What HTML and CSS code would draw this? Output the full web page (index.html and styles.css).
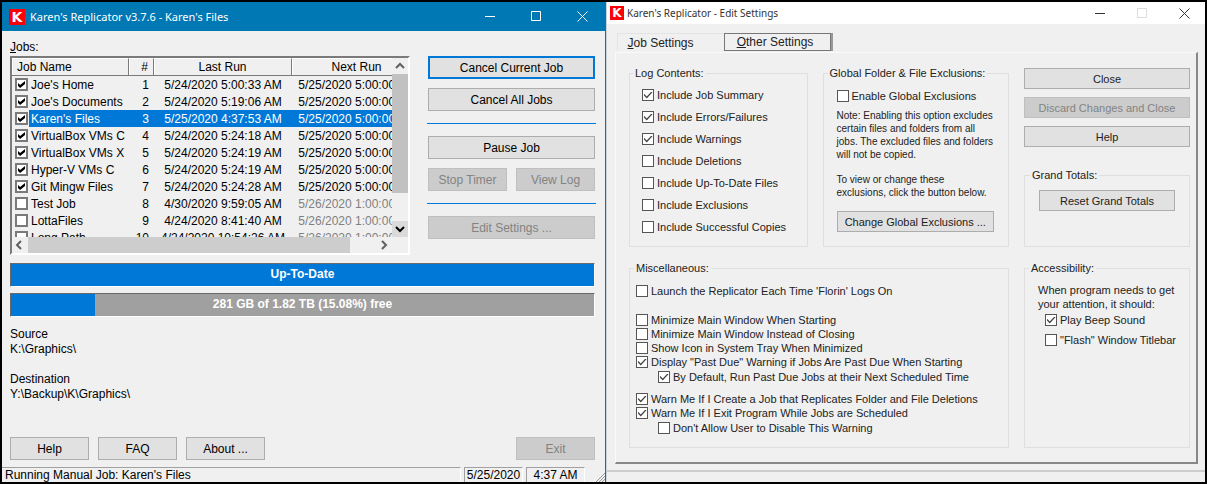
FILE: index.html
```html
<!DOCTYPE html>
<html lang="en">
<head>
	<meta charset="UTF-8">
	<title>Karen's Replicator</title>
	<link rel="stylesheet" href="styles.css">
</head>
<body>
	<div class="window main">
		<div class="titlebar">
			<span class="logo">K</span>
			<h1>Karen's Replicator v3.7.6 - Karen's Files</h1>
			<div class="winctr">
				<button type="button" aria-label="Minimize"><svg width="11" height="11"><path d="M0 5.5h10"/></svg></button>
				<button type="button" aria-label="Maximize"><svg width="11" height="11"><path d="M.5 .5h9v9h-9z"/></svg></button>
				<button type="button" aria-label="Close"><svg width="11" height="11"><path d="M.5 .5l10 10M10.5 .5l-10 10"/></svg></button>
			</div>
		</div>
		<div class="client">
			<p class="joblabel"><u>J</u>obs:</p>
			<div class="top">
				<div class="list">
					<div class="view">
						<table>
							<colgroup>
								<col class="c_box"><col class="c_name"><col class="c_num"><col class="c_last"><col class="c_next">
							</colgroup>
							<thead>
								<tr><th colspan="2" class="name">Job Name</th><th class="num">#</th><th>Last Run</th><th>Next Run</th></tr>
							</thead>
							<tbody>
								<tr><td class="box"><input type="checkbox" id="j1" checked></td><td class="name"><label for="j1">Joe's Home</label></td><td class="num">1</td><td>5/24/2020 5:00:33 AM</td><td>5/25/2020 5:00:00 AM</td></tr>
								<tr><td class="box"><input type="checkbox" id="j2" checked></td><td class="name"><label for="j2">Joe's Documents</label></td><td class="num">2</td><td>5/24/2020 5:19:06 AM</td><td>5/25/2020 5:00:00 AM</td></tr>
								<tr class="cur"><td class="box"><input type="checkbox" id="j3" checked></td><td class="name"><label for="j3">Karen's Files</label></td><td class="num">3</td><td>5/25/2020 4:37:53 AM</td><td>5/25/2020 5:00:00 AM</td></tr>
								<tr><td class="box"><input type="checkbox" id="j4" checked></td><td class="name"><label for="j4">VirtualBox VMs C</label></td><td class="num">4</td><td>5/24/2020 5:24:18 AM</td><td>5/25/2020 5:00:00 AM</td></tr>
								<tr><td class="box"><input type="checkbox" id="j5" checked></td><td class="name"><label for="j5">VirtualBox VMs X</label></td><td class="num">5</td><td>5/24/2020 5:24:19 AM</td><td>5/25/2020 5:00:00 AM</td></tr>
								<tr><td class="box"><input type="checkbox" id="j6" checked></td><td class="name"><label for="j6">Hyper-V VMs C</label></td><td class="num">6</td><td>5/24/2020 5:24:19 AM</td><td>5/25/2020 5:00:00 AM</td></tr>
								<tr><td class="box"><input type="checkbox" id="j7" checked></td><td class="name"><label for="j7">Git Mingw Files</label></td><td class="num">7</td><td>5/24/2020 5:24:28 AM</td><td>5/25/2020 5:00:00 AM</td></tr>
								<tr><td class="box"><input type="checkbox" id="j8"></td><td class="name"><label for="j8">Test Job</label></td><td class="num">8</td><td>4/30/2020 9:59:05 AM</td><td class="off">5/26/2020 1:00:00 AM</td></tr>
								<tr><td class="box"><input type="checkbox" id="j9"></td><td class="name"><label for="j9">LottaFiles</label></td><td class="num">9</td><td>4/24/2020 8:41:40 AM</td><td class="off">5/26/2020 1:00:00 AM</td></tr>
								<tr><td class="box"><input type="checkbox" id="j10"></td><td class="name"><label for="j10">Long Path</label></td><td class="num">10</td><td>4/24/2020 10:54:26 AM</td><td class="off">5/26/2020 1:00:00 AM</td></tr>
							</tbody>
						</table>
					</div>
					<div class="vscroll">
						<svg width="16" height="16"><path d="M4 10l4-4 4 4"/></svg>
						<b></b>
						<svg class="down" width="16" height="16"><path d="M4 6l4 4 4-4"/></svg>
					</div>
					<div class="hscroll">
						<svg width="16" height="16"><path d="M9 4l-4 4 4 4"/></svg>
						<b></b>
						<svg width="16" height="16"><path d="M6 4l4 4-4 4"/></svg>
					</div>
				</div>
				<div class="side">
					<button type="button" class="btn default">Cancel Current Job</button>
					<button type="button" class="btn">Cancel All Jobs</button>
					<hr>
					<button type="button" class="btn">Pause Job</button>
					<div class="pair">
						<button type="button" class="btn" disabled>Stop Timer</button>
						<button type="button" class="btn" disabled>View Log</button>
					</div>
					<hr>
					<button type="button" class="btn" disabled>Edit Settings ...</button>
				</div>
			</div>
			<div class="bar"><i style="width:100%"></i><span>Up-To-Date</span></div>
			<div class="bar"><i style="width:14.4%"></i><span>281 GB of 1.82 TB (15.08%) free</span></div>
			<dl class="paths">
				<dt>Source</dt>
				<dd>K:\Graphics\</dd>
				<dt>Destination</dt>
				<dd>Y:\Backup\K\Graphics\</dd>
			</dl>
			<div class="bottom">
				<button type="button" class="btn">Help</button>
				<button type="button" class="btn">FAQ</button>
				<button type="button" class="btn">About ...</button>
				<button type="button" class="btn exit" disabled>Exit</button>
			</div>
		</div>
		<div class="status">
			<span class="msg">Running Manual Job: Karen's Files</span>
			<span class="date">5/25/2020</span>
			<span class="time">4:37 AM</span>
			<svg class="grip" width="9" height="9"><path d="M0 9l9-9M3 9l6-6M6 9l3-3"/></svg>
		</div>
	</div>

	<div class="window settings">
		<div class="titlebar">
			<span class="logo">K</span>
			<h1>Karen's Replicator - Edit Settings</h1>
			<div class="winctr">
				<button type="button" aria-label="Minimize"><svg width="11" height="11"><path d="M0 5.5h10"/></svg></button>
				<button type="button" aria-label="Maximize" disabled><svg width="11" height="11"><path d="M.5 .5h9v9h-9z"/></svg></button>
				<button type="button" aria-label="Close"><svg width="11" height="11"><path d="M.5 .5l10 10M10.5 .5l-10 10"/></svg></button>
			</div>
		</div>
		<div class="tabs">
			<button type="button"><u>J</u>ob Settings</button>
			<button type="button" class="cur"><u>O</u>ther Settings</button>
		</div>
		<div class="panel">
			<fieldset class="log">
				<legend>Log Contents:</legend>
				<label><input type="checkbox" checked>Include Job Summary</label>
				<label><input type="checkbox" checked>Include Errors/Failures</label>
				<label><input type="checkbox" checked>Include Warnings</label>
				<label><input type="checkbox">Include Deletions</label>
				<label><input type="checkbox">Include Up-To-Date Files</label>
				<label><input type="checkbox">Include Exclusions</label>
				<label><input type="checkbox">Include Successful Copies</label>
			</fieldset>
			<fieldset class="global">
				<legend>Global Folder &amp; File Exclusions:</legend>
				<label><input type="checkbox">Enable Global Exclusions</label>
				<p>Note: Enabling this option excludes<br>certain files and folders from all<br>jobs. The excluded files and folders<br>will not be copied.</p>
				<p>To view or change these<br>exclusions, click the button below.</p>
				<button type="button" class="btn">Change Global Exclusions ...</button>
			</fieldset>
			<div class="actions">
				<button type="button" class="btn">Close</button>
				<button type="button" class="btn" disabled>Discard Changes and Close</button>
				<button type="button" class="btn">Help</button>
				<fieldset class="totals">
					<legend>Grand Totals:</legend>
					<button type="button" class="btn">Reset Grand Totals</button>
				</fieldset>
			</div>
			<fieldset class="misc">
				<legend>Miscellaneous:</legend>
				<div class="group first">
					<label><input type="checkbox">Launch the Replicator Each Time 'Florin' Logs On</label>
				</div>
				<div class="group">
					<label><input type="checkbox">Minimize Main Window When Starting</label>
					<label><input type="checkbox">Minimize Main Window Instead of Closing</label>
					<label><input type="checkbox">Show Icon in System Tray When Minimized</label>
					<label><input type="checkbox" checked>Display "Past Due" Warning if Jobs Are Past Due When Starting</label>
					<label class="sub"><input type="checkbox" checked>By Default, Run Past Due Jobs at their Next Scheduled Time</label>
				</div>
				<div class="group">
					<label><input type="checkbox" checked>Warn Me If I Create a Job that Replicates Folder and File Deletions</label>
					<label><input type="checkbox" checked>Warn Me If I Exit Program While Jobs are Scheduled</label>
					<label class="sub"><input type="checkbox">Don't Allow User to Disable This Warning</label>
				</div>
			</fieldset>
			<fieldset class="access">
				<legend>Accessibility:</legend>
				<p>When program needs to get<br>your attention, it should:</p>
				<label><input type="checkbox" checked>Play Beep Sound</label>
				<label><input type="checkbox">"Flash" Window Titlebar</label>
			</fieldset>
		</div>
		<div class="foot"></div>
	</div>
</body>
</html>
```
FILE: styles.css
```css
*{
	margin: 0;
	padding: 0;
	box-sizing: border-box;
}
body{
	display: grid;
	grid-template-columns: 604fr 598fr;
	gap: 1px;
	min-height: 100vh;
	padding: 2px;
	background: #000;
	color: #000;
	font: 12px/14px "Liberation Sans", Arial, sans-serif;
}
button,input{
	font: inherit;
	color: inherit;
}
.window{
	display: flex;
	flex-direction: column;
	min-width: 0;
	background: #f0f0f0;
}
.main{
	border-right: 1px solid #0078b4;
	box-shadow: 1px 0 0 #c8d4dc;
}

/* title bars */
.titlebar{
	display: flex;
	align-items: center;
	height: 29px;
	padding-left: 7px;
	background: #0078b4;
	color: #fff;
}
.titlebar h1{
	flex: 1;
	padding-left: 5px;
	font: 11px/16px "Noto Sans", "Open Sans", sans-serif;
	white-space: nowrap;
}
.logo{
	width: 16px;
	height: 16px;
	background: #fb0007;
	color: #fff;
	font: bold 14px/16px "DejaVu Sans", sans-serif;
	text-align: center;
}
.winctr{
	display: flex;
	align-self: stretch;
}
.winctr button{
	display: grid;
	place-items: center;
	width: 46px;
	border: 0;
	background: none;
}
.winctr svg{
	fill: none;
	stroke: currentColor;
}
.winctr button:disabled{
	color: #ddd;
}

/* buttons */
.btn{
	height: 23px;
	border: 1px solid #adadad;
	background: #e1e1e1;
	white-space: nowrap;
}
.btn.default{
	border: 2px solid #0078d7;
}
.btn:disabled{
	border-color: #bfbfbf;
	background: #ccc;
	color: #838383;
}

/* main window */
.client{
	flex: 1;
	display: flex;
	flex-direction: column;
	padding: 9px 10px 7px 8px;
}
.joblabel{
	margin-bottom: 2px;
}
.top{
	display: grid;
	grid-template-columns: 1fr 167px;
	gap: 18px;
	margin-bottom: 8px;
}
.list{
	display: grid;
	grid-template-columns: 1fr 16px;
	grid-template-rows: 179px 16px;
	min-width: 0;
	border: 2px solid #fff;
	border-top-color: #7a7a7a;
	border-left-color: #7a7a7a;
}
.view{
	overflow: hidden;
}
.view table{
	width: 410px;
	table-layout: fixed;
	border-collapse: separate;
	border-spacing: 0;
}
.c_box{
	width: 17px;
}
.c_name{
	width: 100px;
}
.c_num{
	width: 25px;
}
.c_last{
	width: 138px;
}
.c_next{
	width: 130px;
}
.view th{
	height: 18px;
	border-top: 1px solid #fff;
	border-right: 1px solid #7a7a7a;
	border-bottom: 1px solid #7a7a7a;
	box-shadow: inset 1px 0 0 #fff;
	font-weight: normal;
}
.view td{
	height: 17px;
	text-align: center;
	white-space: nowrap;
}
.view .name{
	padding-left: 2px;
	text-align: left;
}
.view th.name{
	padding-left: 5px;
}
.view .num{
	padding-right: 5px;
	text-align: right;
}
.view .box{
	padding-left: 3px;
}
.view .off{
	color: #808080;
}
.cur td{
	background: #0078d7;
	color: #fff;
}
.cur td.box{
	background: none;
}
.view input{
	appearance: none;
	display: grid;
	place-items: center;
	width: 13px;
	height: 13px;
	border: 2px solid #7a7a7a;
	background: #fff;
}
.view input:checked::after{
	content: "";
	width: 7px;
	height: 7px;
	background: #000;
	clip-path: polygon(0 28%, 0 70%, 30% 100%, 100% 42%, 100% 0, 30% 58%);
}
.vscroll{
	display: grid;
	grid-template-rows: 16px 119px 1fr;
}
.vscroll svg,.hscroll svg{
	display: block;
	fill: none;
	stroke: #606060;
	stroke-width: 2;
}
.vscroll b{
	background: #c1c1c1;
}
.vscroll svg.down{
	align-self: end;
	background: #dadada;
	stroke: #000;
}
.hscroll{
	display: flex;
}
.hscroll b{
	flex: 1;
	margin-right: 26px;
	background: #cdcdcd;
}
.side{
	display: flex;
	flex-direction: column;
	gap: 9px;
}
.side hr{
	margin: 3px -1px;
	border: 0;
	border-top: 1px solid #0078d7;
}
.pair{
	display: grid;
	grid-template-columns: 1fr 1fr;
	gap: 9px;
}
.bar{
	display: grid;
	height: 24px;
	margin-bottom: 6px;
	border: 1px solid #fff;
	border-top-color: #696969;
	border-left-color: #696969;
	background: #a0a0a0;
	color: #fff;
	font-weight: bold;
	line-height: 20px;
	text-align: center;
}
.bar i,.bar span{
	grid-area: 1 / 1;
}
.bar i{
	background: #0078d7;
}
.paths{
	padding-top: 4px;
	line-height: 15px;
}
.paths dd{
	margin-bottom: 15px;
}
.bottom{
	display: flex;
	gap: 9px;
	margin-top: auto;
}
.bottom .btn{
	width: 79px;
}
.bottom .exit{
	margin-left: auto;
}
.status{
	display: flex;
	gap: 3px;
	height: 15px;
}
.status span{
	border-top: 1px solid #a0a0a0;
}
.status .msg{
	flex: 1;
	padding-left: 3px;
	border-right: 1px solid #fff;
}
.status .date,.status .time{
	width: 59px;
	border-left: 1px solid #a0a0a0;
	border-right: 1px solid #fff;
	text-align: center;
}
.grip{
	align-self: end;
	margin-left: 8px;
	fill: none;
	stroke: #999;
}

/* settings window */
.settings{
	color: #222;
	font-size: 11px;
}
.settings .titlebar{
	height: 22px;
	padding-left: 3px;
	background: #fff;
	color: #333;
}
.settings .titlebar h1{
	padding-left: 3px;
	font-size: 10px;
}
.settings .logo{
	width: 14px;
	height: 14px;
	font-size: 12px;
	line-height: 14px;
}
.settings .winctr button{
	width: 42px;
}
.tabs{
	display: flex;
	margin-top: 9px;
	padding-left: 10px;
}
.tabs button{
	width: 107px;
	height: 18px;
	border: 1px solid #e4e4e4;
	border-width: 1px 0 0 1px;
	background: none;
	font-size: 12px;
	padding-right: 21px;
}
.tabs .cur{
	border: 1px solid #777;
	box-shadow: 2px 0 0 #999;
	padding-right: 5px;
}
.panel{
	flex: 1;
	display: grid;
	grid-template-columns: 180fr 188fr 166px;
	grid-template-rows: 181px 1fr;
	gap: 14px 15px;
	margin: 1px 7px 0 8px;
	padding: 13px 6px 14px 13px;
	border: 1px solid #fafafa;
	border-right: 2px solid #888;
	border-bottom: 2px solid #888;
}
.panel fieldset{
	min-width: 0;
	border: 1px solid #dfdfdf;
}
/* the legend starts left of the fieldset's own padding */
.panel legend{
	margin-left: -9px;
	padding: 0 2px;
	white-space: nowrap;
}
.panel label{
	display: flex;
	align-items: center;
	gap: 3px;
	height: 14px;
	white-space: nowrap;
}
.panel input{
	appearance: none;
	display: grid;
	place-items: center;
	width: 12px;
	height: 12px;
	border: 1px solid #555;
	background: #fff;
}
.panel input:checked::after{
	content: "";
	width: 9px;
	height: 7px;
	background: #444;
	clip-path: polygon(0 50%, 10% 36%, 36% 72%, 88% 0, 100% 12%, 36% 100%);
}
.panel .btn{
	height: 21px;
}
.panel .log{
	padding: 8px 0 0 12px;
}
.log label{
	margin-bottom: 8px;
}
.panel .global{
	padding: 9px 14px 0 13px;
}
.global p{
	margin-bottom: 12px;
	font-size: 10px;
	line-height: 13px;
	white-space: nowrap;
}
.global label{
	margin-bottom: 6px;
}
.global .btn{
	width: 100%;
}
.actions{
	display: flex;
	flex-direction: column;
	gap: 8px;
	padding-top: 2px;
}
.panel .totals{
	flex: 1;
	margin-top: 13px;
	padding: 8px 14px;
}
.totals .btn{
	width: 100%;
}
.panel .misc{
	grid-column: 1 / 3;
	padding: 9px 6px 0;
}
.misc legend{
	margin-left: -2px;
}
.group{
	margin-bottom: 8px;
}
.group.first{
	margin-bottom: 15px;
}
.panel .sub{
	margin: 1px 0 0 22px;
}
.panel .access{
	padding: 8px 0 0 13px;
}
.access label{
	margin: 2px 0 6px 7px;
}
.foot{
	height: 12px;
	margin-top: 6px;
	border-top: 2px solid #ccc;
}
```
